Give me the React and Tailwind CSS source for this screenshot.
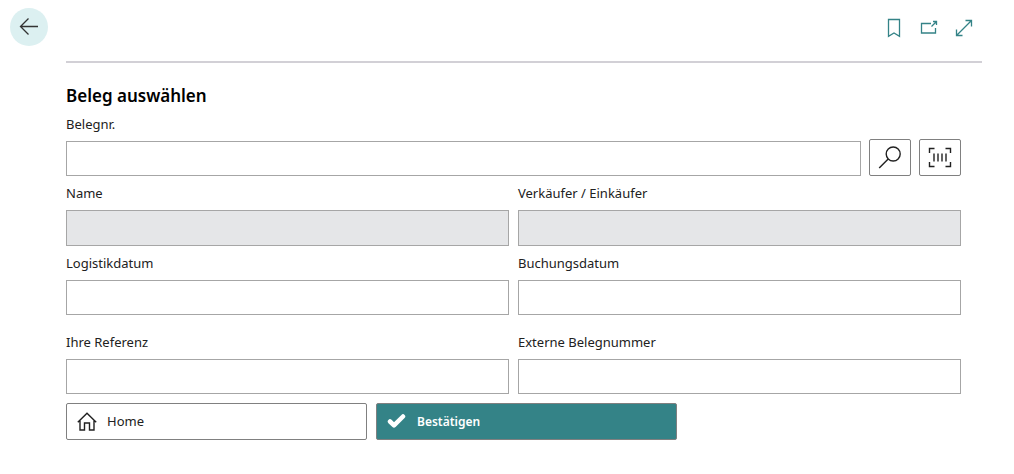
import React, { useState } from 'react';

const BookmarkIcon = () => (
  <svg className="w-5 h-5" viewBox="0 0 20 20" fill="none" stroke="currentColor" strokeWidth="1.3" aria-hidden="true">
    <path d="M4.5 1.5h11v16.8l-5.5-3.3-5.5 3.3z" />
  </svg>
);

const PopOutIcon = () => (
  <svg className="w-5 h-5" viewBox="0 0 20 20" fill="none" stroke="currentColor" strokeWidth="1.3" aria-hidden="true">
    <path d="M12 5.5H2.5v9.5h14v-5M12.5 8.5l5-5M14 3.5h3.5V7" />
  </svg>
);

const ExpandIcon = () => (
  <svg className="w-5 h-5" viewBox="0 0 20 20" fill="none" stroke="currentColor" strokeWidth="1.3" aria-hidden="true">
    <path d="M2.5 17.5l15-15M11.5 2.5h6v6M2.5 11.5v6h6" />
  </svg>
);

const BackIcon = () => (
  <svg className="w-5 h-5" viewBox="0 0 20 20" fill="none" stroke="currentColor" strokeWidth="1.3" aria-hidden="true">
    <path d="M19 9.5H1.5M9.5 1.5l-8 8 8 8" />
  </svg>
);

const SearchIcon = () => (
  <svg className="w-6 h-6" viewBox="0 0 24 24" fill="none" stroke="currentColor" strokeWidth="1.4" aria-hidden="true">
    <circle cx="15.2" cy="8" r="7" />
    <path d="M10.2 13L1.2 22" />
  </svg>
);

const BarcodeIcon = () => (
  <svg className="w-6 h-6" viewBox="0 0 24 24" fill="none" stroke="currentColor" strokeWidth="1.4" aria-hidden="true">
    <path d="M6.5 2.5h-5v4.5M17.5 2.5h5v4.5M6.5 20.5h-5v-4.5M17.5 20.5h5v-4.5" />
    <path d="M6 7.5v8M10 7.5v8M14 7.5v8M18 7.5v8" />
  </svg>
);

const HomeIcon = () => (
  <svg className="w-5 h-5" viewBox="0 0 20 20" fill="none" stroke="currentColor" strokeWidth="1.4" aria-hidden="true">
    <path d="M.8 10.3L10 1.2l9.2 9.1M3 8.8v9.2h4.5v-7h5v7H17V8.8" />
  </svg>
);

const CheckIcon = () => (
  <svg className="w-5 h-5" viewBox="0 0 20 20" fill="none" stroke="currentColor" strokeWidth="4.5" strokeLinecap="round" strokeLinejoin="round" aria-hidden="true">
    <path d="M3 9.5l4 3.8 9-8.8" />
  </svg>
);

const Field = ({ id, label, disabled = false, children }) => {
  const [value, setValue] = useState('');

  return (
    <div className="flex-1 min-w-0">
      <label htmlFor={id} className="block mb-[7px] text-[13px] leading-[19px] text-[#212121]">
        {label}
      </label>
      <div className="flex items-end gap-2">
        <input
          id={id}
          type="text"
          value={value}
          disabled={disabled}
          onChange={(e) => setValue(e.target.value)}
          className={`flex-1 min-w-0 px-2 text-[13px] border border-[#a6a6a6] outline-none ${
            disabled ? 'h-9 bg-[#e5e6e8]' : 'h-[35px] bg-white focus:border-[#348387]'
          }`}
        />
        {children}
      </div>
    </div>
  );
};

const IconButton = ({ label, children }) => (
  <button
    type="button"
    aria-label={label}
    className="-mt-0.5 w-[42px] h-[37px] flex items-center justify-center rounded-xs border border-[#808080] text-[#212121] hover:bg-gray-50"
  >
    {children}
  </button>
);

const App = () => {
  return (
    <div className="bg-white font-['Noto_Sans',sans-serif] text-[#212121]">
      <header className="flex items-start pl-2.5 pr-8 pt-2">
        <button
          type="button"
          aria-label="Zurück"
          className="w-[38px] h-[38px] mr-[18px] flex items-center justify-center rounded-full bg-[#dcf0f1] text-[#333333]"
        >
          <BackIcon />
        </button>
        <div className="flex-1 h-[55px] flex items-start justify-end gap-[15px] pt-2.5 pr-2 border-b-2 border-[#d2d0d6] text-[#348387]">
          <button type="button" aria-label="Lesezeichen">
            <BookmarkIcon />
          </button>
          <button type="button" aria-label="In neuem Fenster öffnen">
            <PopOutIcon />
          </button>
          <button type="button" aria-label="Vollbild">
            <ExpandIcon />
          </button>
        </div>
      </header>

      <form className="pl-[66px] pr-[53px] pt-[21px] pb-8" onSubmit={(e) => e.preventDefault()}>
        <h1 className="mb-[7px] text-[17px] leading-6 font-semibold text-black">Beleg auswählen</h1>

        <div className="flex flex-col gap-2">
          <Field id="belegnr" label="Belegnr.">
            <IconButton label="Suchen">
              <SearchIcon />
            </IconButton>
            <IconButton label="Barcode scannen">
              <BarcodeIcon />
            </IconButton>
          </Field>
          <div className="flex gap-[9px]">
            <Field id="name" label="Name" disabled />
            <Field id="verkaeufer" label="Verkäufer / Einkäufer" disabled />
          </div>
          <div className="flex gap-[9px]">
            <Field id="logistikdatum" label="Logistikdatum" />
            <Field id="buchungsdatum" label="Buchungsdatum" />
          </div>
          <div className="flex gap-[9px] pt-2.5">
            <Field id="referenz" label="Ihre Referenz" />
            <Field id="externe" label="Externe Belegnummer" />
          </div>
        </div>

        <div className="mt-[9px] flex gap-[9px]">
          <button
            type="button"
            className="basis-[301px] h-[37px] flex items-center gap-2.5 px-2.5 rounded-xs border border-[#808080] text-[13px] hover:bg-gray-50"
          >
            <HomeIcon />
            Home
          </button>
          <button
            type="submit"
            className="basis-[301px] h-[37px] flex items-center gap-2.5 px-2.5 rounded-xs border border-[#808080] bg-[#348387] text-[12px] font-semibold text-white"
          >
            <CheckIcon />
            Bestätigen
          </button>
        </div>
      </form>
    </div>
  );
};

export default App;
